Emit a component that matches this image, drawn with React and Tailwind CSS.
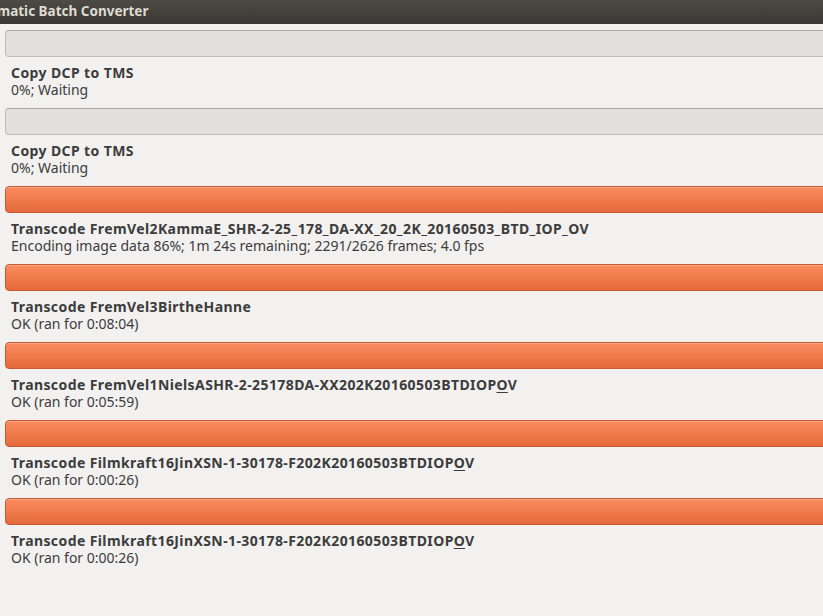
import React from "react";

const items = [
  { title: "Copy DCP to TMS", status: "0%; Waiting", done: false },
  { title: "Copy DCP to TMS", status: "0%; Waiting", done: false },
  {
    title: "Transcode FremVel2KammaE_SHR-2-25_178_DA-XX_20_2K_20160503_BTD_IOP_OV",
    status: "Encoding image data 86%; 1m 24s remaining; 2291/2626 frames; 4.0 fps",
    done: true,
  },
  { title: "Transcode FremVel3BirtheHanne", status: "OK (ran for 0:08:04)", done: true },
  { title: "Transcode FremVel1NielsASHR-2-25178DA-XX202K20160503BTDIOP", u: true, status: "OK (ran for 0:05:59)", done: true },
  { title: "Transcode Filmkraft16JinXSN-1-30178-F202K20160503BTDIOP", u: true, status: "OK (ran for 0:00:26)", done: true },
  { title: "Transcode Filmkraft16JinXSN-1-30178-F202K20160503BTDIOP", u: true, status: "OK (ran for 0:00:26)", done: true },
];

function Bar({ done }) {
  if (done) {
    return (
      <div className="h-[27px] w-[830px] ml-[5px] rounded-[4px] border border-[#c45a2f] bg-gradient-to-b from-[#fa8c5f] to-[#e5693a] shadow-[inset_0_1px_0_rgba(255,255,255,0.25)]" />
    );
  }
  return (
    <div className="h-[27px] w-[830px] ml-[5px] rounded-[4px] border border-[#bdbcb8] border-t-[#a9a8a4] bg-[#e1e0dd]" />
  );
}

export default function App() {
  return (
    <div
      className="w-[823px] h-[616px] overflow-hidden bg-[#f2f1f0] text-[#3c3c3c]"
      style={{ fontFamily: '"Noto Sans", "Open Sans", sans-serif' }}
    >
      <div className="h-[24px] bg-gradient-to-b from-[#4c4a44] to-[#3a3935] flex items-center overflow-hidden">
        <span className="ml-[-3px] text-[13.5px] font-bold text-[#dfdbd2] whitespace-nowrap leading-none">
          matic Batch Converter
        </span>
      </div>
      <div className="pt-[6px]">
        {items.map((it, i) => (
          <div key={i} className="mb-[10px]">
            <Bar done={it.done} />
            <div className="pl-[11px] pt-[7px] text-[14px] whitespace-nowrap">
              <div className="font-bold h-[17px] leading-[17px] tracking-[0.4px]">
                {it.title}
                {it.u && (
                  <>
                    <span className="underline underline-offset-2">O</span>V
                  </>
                )}
              </div>
              <div className="h-[17px] leading-[17px]">{it.status}</div>
            </div>
          </div>
        ))}
      </div>
    </div>
  );
}
